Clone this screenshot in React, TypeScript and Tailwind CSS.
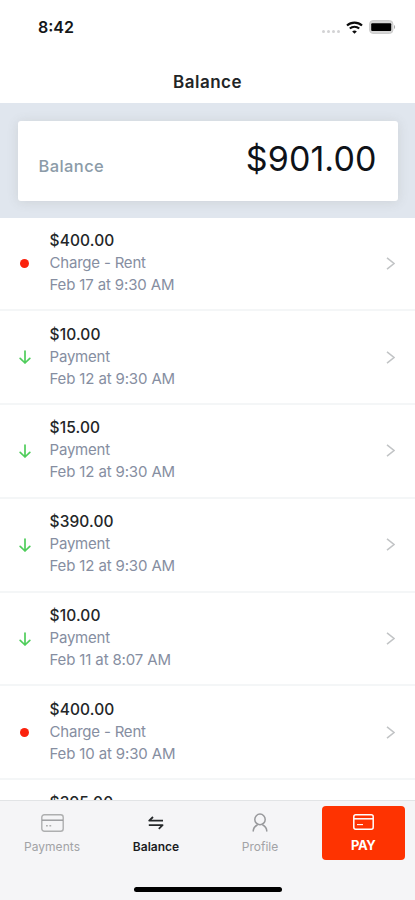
import React from "react";

type Kind = "charge" | "payment";

interface Entry {
  amount: string;
  kind: Kind;
  date: string;
}

const entries: Entry[] = [
  { amount: "$400.00", kind: "charge", date: "Feb 17 at 9:30 AM" },
  { amount: "$10.00", kind: "payment", date: "Feb 12 at 9:30 AM" },
  { amount: "$15.00", kind: "payment", date: "Feb 12 at 9:30 AM" },
  { amount: "$390.00", kind: "payment", date: "Feb 12 at 9:30 AM" },
  { amount: "$10.00", kind: "payment", date: "Feb 11 at 8:07 AM" },
  { amount: "$400.00", kind: "charge", date: "Feb 10 at 9:30 AM" },
];

function StatusBar() {
  return (
    <div className="flex h-[54px] items-center justify-between pl-[38px] pr-[19px]">
      <span className="text-[16px] font-semibold leading-none text-[#151719]">8:42</span>
      <div className="flex items-center">
        <div className="mr-[6px] mt-[9px] flex gap-[2px]">
          <i className="size-[3px] rounded-full bg-[#d2d2d4]" />
          <i className="size-[3px] rounded-full bg-[#d2d2d4]" />
          <i className="size-[3px] rounded-full bg-[#d2d2d4]" />
          <i className="size-[3px] rounded-full bg-[#d2d2d4]" />
        </div>
        <svg className="mr-[6px]" width="17" height="13" viewBox="0 0 17 13" fill="none" stroke="#0b0b0b" strokeWidth="2.1">
          <path d="M1 4.6C5.2.6 11.8.6 16 4.6" />
          <path d="M3.8 7.6c2.7-2.5 6.7-2.5 9.4 0" />
          <path d="M8.5 12.8 6.2 10.4c1.3-1.2 3.3-1.2 4.6 0z" fill="#0b0b0b" stroke="none" />
        </svg>
        <svg width="27" height="14" viewBox="0 0 27 14">
          <rect x=".6" y=".6" width="23.3" height="12.8" rx="3.4" fill="#d6d6d6" stroke="#cacaca" strokeWidth="1" />
          <rect x="2.2" y="3.2" width="20" height="7.8" rx="1" fill="#000" />
          <path d="M25 5v4c1.5-.6 1.5-3.4 0-4z" fill="#aaa" />
        </svg>
      </div>
    </div>
  );
}

function Marker({ kind }: { kind: Kind }) {
  if (kind === "charge") return <span className="size-[9px] rounded-full bg-[#fb220d]" />;
  return (
    <svg width="12" height="14" viewBox="0 0 12 14" fill="none" stroke="#4fcd5b" strokeWidth="1.7" strokeLinecap="round" strokeLinejoin="round">
      <path d="M6 1v12M1.2 8.4 6 13l4.8-4.6" />
    </svg>
  );
}

function Row({ entry }: { entry: Entry }) {
  return (
    <div className="flex h-[93.8px] shrink-0 items-center border-b-2 border-[#f4f6f7]">
      <div className="flex w-[49.5px] justify-center">
        <Marker kind={entry.kind} />
      </div>
      <div className="flex-1 whitespace-nowrap pb-px text-[15px] leading-[22px] text-[#868ea1]">
        <div className="text-[15.5px] font-medium tracking-[0.12px] text-[#232628]">{entry.amount}</div>
        <div className="tracking-[-0.2px]">{entry.kind === "charge" ? "Charge - Rent" : "Payment"}</div>
        <div className="tracking-[-0.14px]">{entry.date}</div>
      </div>
      <svg className="mr-[20.5px]" width="9" height="13" viewBox="0 0 9 13" fill="none" stroke="#c2c4c6" strokeWidth="1.5">
        <path d="m1 .8 7 5.7-7 5.7" />
      </svg>
    </div>
  );
}

function CardIcon({ pay = false }: { pay?: boolean }) {
  return pay ? (
    <svg width="21" height="16" viewBox="0 0 21 16" fill="none" stroke="#fff" strokeWidth="1.5">
      <rect x=".8" y=".8" width="19.4" height="14.4" rx="2" />
      <path d="M1 4.8h19" />
      <path d="M4 10.6h6" strokeWidth="1.1" />
    </svg>
  ) : (
    <svg width="23" height="18" viewBox="0 0 23 18" fill="none" stroke="#aeafb0" strokeWidth="1.4">
      <rect x=".8" y=".8" width="21.4" height="16.4" rx="2.5" />
      <path d="M1 6.2h21" stroke="#97989a" />
      <path d="M5 11.8h1.8M8.4 11.8h1.8" strokeWidth="1.4" />
    </svg>
  );
}

function TabBar() {
  return (
    <nav className="flex h-[100px] shrink-0 flex-col border-t border-[#e2e4e6] bg-[#f5f5f7]">
      <div className="flex h-[64px] text-[12px] leading-none text-[#a2a3a6]">
        <div className="flex w-[104px] flex-col items-center pt-[13px]">
          <CardIcon />
          <span className="mt-[8px] leading-[13px] tracking-[0.05px]">Payments</span>
        </div>
        <div className="flex w-[104px] flex-col items-center pt-[14px] text-[#1b1d1f]">
          <svg width="16" height="16" viewBox="0 0 16 16" fill="none" stroke="#25282a" strokeWidth="1.8" strokeLinejoin="round">
            <path d="M15 5.6H1.2L5 2" />
            <path d="M.8 10.2h13.8l-3.8 3.6" />
          </svg>
          <span className="mt-[9px] font-semibold leading-[13px]">Balance</span>
        </div>
        <div className="flex w-[104px] flex-col items-center pt-[12px]">
          <svg width="16" height="19" viewBox="0 0 16 19" fill="none" stroke="#98999c" strokeWidth="1.5" strokeLinecap="round">
            <ellipse cx="8" cy="6.4" rx="5.2" ry="5.3" />
            <path d="M1.2 18c.2-2.9 1.7-4.8 4-6M14.8 18c-.2-2.9-1.7-4.8-4-6" />
          </svg>
          <span className="mt-[8px] leading-[13px]">Profile</span>
        </div>
        <div className="ml-[10px] mt-[5px] flex h-[53.5px] w-[82.5px] flex-col items-center rounded-[4px] bg-[#fe3301] pt-[8px] text-white">
          <CardIcon pay />
          <span className="mt-[9px] text-[13px] font-bold leading-[13px] tracking-[-0.3px]">PAY</span>
        </div>
      </div>
      <div className="mx-auto mt-[22px] h-[5px] w-[148px] rounded-full bg-black" />
    </nav>
  );
}

export default function App() {
  return (
    <main className="flex h-[900px] w-[415px] flex-col overflow-hidden bg-white font-['Inter',sans-serif]">
      <header className="h-[102.5px] shrink-0">
        <StatusBar />
        <h1 className="mt-[18px] text-center text-[17px] font-semibold leading-[20px] tracking-[0.5px] text-[#222527]">Balance</h1>
      </header>
      <section className="h-[115px] shrink-0 bg-[#e0e6ee] px-[17.5px] pt-[18.5px]">
        <div className="flex h-[80px] items-center justify-between rounded-[3px] bg-white pl-[21px] pr-[21px] shadow-[0_1px_12px_rgba(90,90,80,0.14)]">
          <span className="mt-[11px] text-[16.5px] font-medium tracking-[0.4px] text-[#8b9ba8]">Balance</span>
          <span className="-mt-[4px] text-[34px] leading-none tracking-[0.1px] text-[#0e1218]">$901.00</span>
        </div>
      </section>
      <section className="min-h-0 flex-1 overflow-hidden">
        {entries.map((entry, i) => (
          <Row key={i} entry={entry} />
        ))}
        <div className="pl-[49.5px] pt-[12px] text-[15.5px] font-medium leading-[22px] tracking-[0.12px] text-[#232628]">
          $395.00
        </div>
      </section>
      <TabBar />
    </main>
  );
}
